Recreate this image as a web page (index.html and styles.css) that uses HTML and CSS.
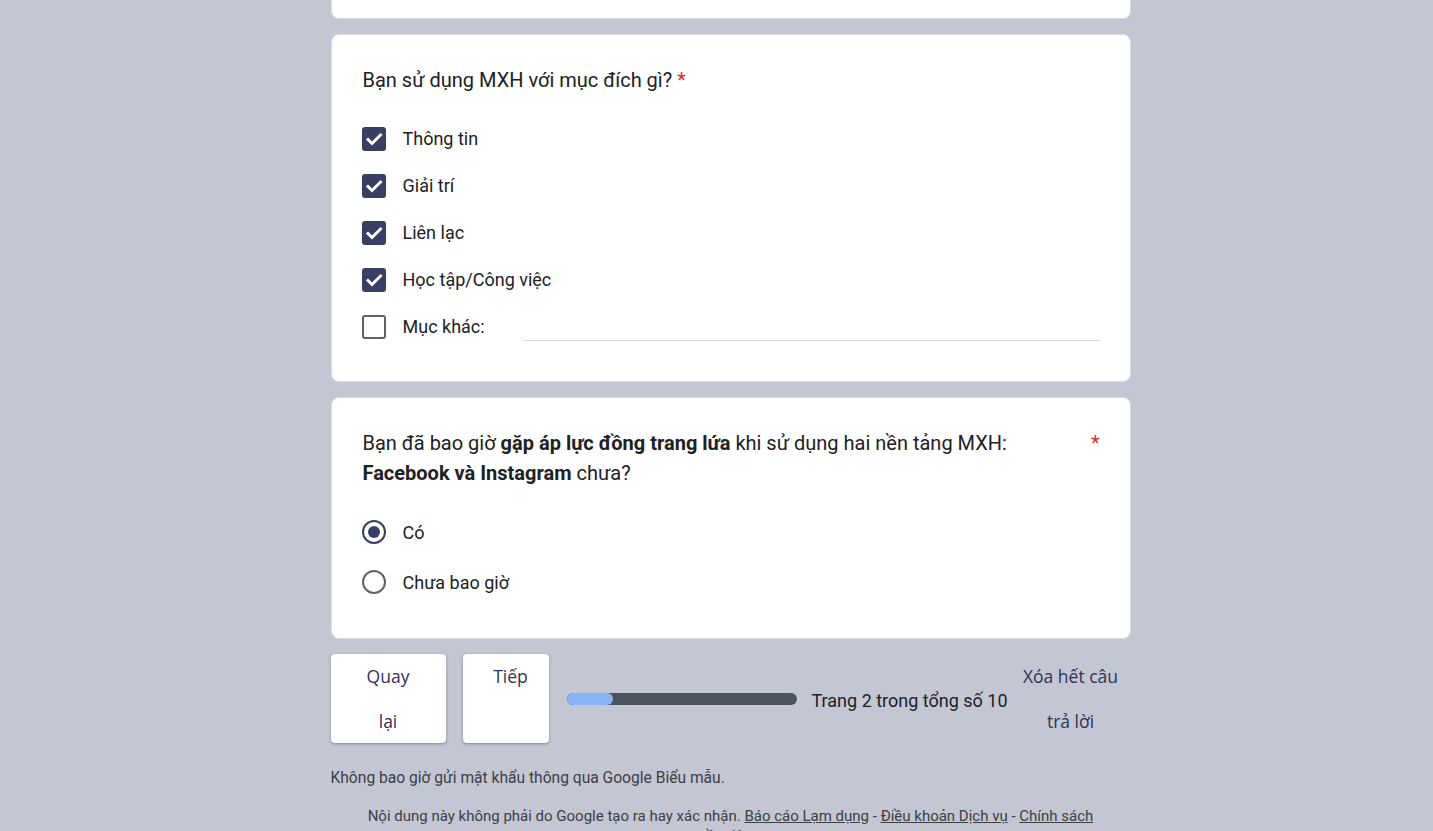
FILE: index.html
```html
<!DOCTYPE html>
<html lang="vi">
<head>
<meta charset="utf-8">
<title>Biểu mẫu</title>
<link rel="stylesheet" href="styles.css">
</head>
<body>
<div class="page">
  <div class="card card-top"></div>

  <div class="card q-card">
    <div class="q-title">Bạn sử dụng MXH với mục đích gì? <span class="req">*</span></div>
    <div class="options">
      <div class="opt">
        <span class="cb checked"><svg viewBox="0 0 24 24" width="24" height="24"><path d="M6 12.5l4 4 8.5-8.5" fill="none" stroke="#fff" stroke-width="3" stroke-linecap="square"/></svg></span>
        <span class="opt-label">Thông tin</span>
      </div>
      <div class="opt">
        <span class="cb checked"><svg viewBox="0 0 24 24" width="24" height="24"><path d="M6 12.5l4 4 8.5-8.5" fill="none" stroke="#fff" stroke-width="3" stroke-linecap="square"/></svg></span>
        <span class="opt-label">Giải trí</span>
      </div>
      <div class="opt">
        <span class="cb checked"><svg viewBox="0 0 24 24" width="24" height="24"><path d="M6 12.5l4 4 8.5-8.5" fill="none" stroke="#fff" stroke-width="3" stroke-linecap="square"/></svg></span>
        <span class="opt-label">Liên lạc</span>
      </div>
      <div class="opt">
        <span class="cb checked"><svg viewBox="0 0 24 24" width="24" height="24"><path d="M6 12.5l4 4 8.5-8.5" fill="none" stroke="#fff" stroke-width="3" stroke-linecap="square"/></svg></span>
        <span class="opt-label">Học tập/Công việc</span>
      </div>
      <div class="opt">
        <span class="cb"></span>
        <span class="opt-label">Mục khác:</span>
        <span class="other-line"></span>
      </div>
    </div>
  </div>

  <div class="card q-card">
    <div class="q-title q-title-split">
      <span class="q-text">Bạn đã bao giờ <b>gặp áp lực đồng trang lứa</b> khi sử dụng hai nền tảng MXH: <b>Facebook và Instagram</b> chưa?</span>
      <span class="req">*</span>
    </div>
    <div class="options radios">
      <div class="opt">
        <span class="radio checked"></span>
        <span class="opt-label">Có</span>
      </div>
      <div class="opt">
        <span class="radio"></span>
        <span class="opt-label">Chưa bao giờ</span>
      </div>
    </div>
  </div>

  <div class="nav">
    <div class="btn btn-back">Quay lại</div>
    <div class="btn btn-next">Tiếp</div>
    <div class="progress"><div class="progress-fill" style="width: 46px"></div></div>
    <div class="page-count">Trang 2 trong tổng số 10</div>
    <div class="clear">Xóa hết câu trả lời</div>
  </div>

  <p class="note">Không bao giờ gửi mật khẩu thông qua Google Biểu mẫu.</p>
  <p class="legal">Nội dung này không phải do Google tạo ra hay xác nhận. <a>Báo cáo Lạm dụng</a> - <a>Điều khoản Dịch vụ</a> - <a>Chính sách quyền riêng tư</a></p>
</div>
</body>
</html>
```
FILE: styles.css
```css
* { box-sizing: border-box; }
html, body { margin: 0; padding: 0; }
body {
  background: #c4c6d4;
  font-family: Roboto, "Liberation Sans", sans-serif;
  color: #202124;
  height: 831px;
  overflow: hidden;
}
.page {
  width: 800px;
  margin-left: calc(50% - 386px);
}
.card {
  background: #fff;
  border: 1px solid #dadce0;
  border-radius: 8px;
  margin-bottom: 15px;
}
.card-top {
  height: 19px;
  border-top: none;
  border-radius: 0 0 8px 8px;
}
.q-card {
  padding: 30px 30px 31px 31px;
}
.q-title {
  font-size: 20px;
  line-height: 30px;
}
.req { color: #d93025; }
.q-title-split {
  display: flex;
  justify-content: space-between;
  align-items: flex-start;
}
.q-text { max-width: 700px; }
.q-text b { font-weight: 700; }
.options { margin-top: 20px; }
.opt {
  display: flex;
  align-items: center;
  height: 47px;
  font-size: 18px;
}
.opt-label { margin-left: 17px; }
.cb {
  width: 24px;
  height: 24px;
  border: 2px solid #5f6368;
  border-radius: 3px;
  flex: none;
  margin-left: -1px;
}
.cb.checked {
  background: #3a3d64;
  border: none;
}
.cb svg { display: block; }
.other-line {
  flex: 1;
  height: 1px;
  background: #dadce0;
  margin-left: 38px;
  margin-top: 28px;
}
.radios { margin-top: 19px; }
.radios .opt { height: 50px; }
.radio {
  width: 24px;
  height: 24px;
  border: 2px solid #5f6368;
  border-radius: 50%;
  flex: none;
  margin-left: -1px;
  display: flex;
  align-items: center;
  justify-content: center;
}
.radio.checked { border-color: #3a3d64; }
.radio.checked::after {
  content: "";
  width: 12px;
  height: 12px;
  border-radius: 50%;
  background: #3a3d64;
}
.nav {
  display: flex;
  align-items: center;
  height: 89px;
}
.btn {
  background: #fff;
  border-radius: 4px;
  box-shadow: 0 1px 2px rgba(60,64,67,.3), 0 1px 3px 1px rgba(60,64,67,.15);
  height: 89px;
  align-self: flex-start;
  font-family: "Open Sans", sans-serif;
  font-weight: 500;
  font-size: 17.5px;
  line-height: 45px;
  color: #2f3257;
  text-align: center;
}
.btn-back { width: 115px; padding: 0 26px; }
.btn-next { width: 86px; margin-left: 17px; padding-left: 10px; }
.progress {
  width: 230px;
  height: 12px;
  border-radius: 6px;
  background: #4c535a;
  margin-left: 18px;
  overflow: hidden;
}
.progress-fill {
  height: 100%;
  background: #8ab4f8;
  border-radius: 6px;
}
.page-count {
  margin-left: 15px;
  font-size: 18px;
  color: #202124;
  padding-top: 4px;
}
.clear {
  margin-left: auto;
  width: 120px;
  align-self: flex-start;
  text-align: center;
  font-family: "Open Sans", sans-serif;
  font-weight: 500;
  font-size: 17.5px;
  line-height: 45px;
  color: #2f3257;
}
.note {
  margin: 25px 0 0;
  font-size: 15.6px;
  line-height: 20px;
  color: #3c4043;
}
.legal {
  margin: 18px auto 0;
  width: 740px;
  text-align: center;
  font-size: 15px;
  line-height: 20px;
  color: #3c4043;
}
.legal a { color: #3c4043; text-decoration: underline; }
```
